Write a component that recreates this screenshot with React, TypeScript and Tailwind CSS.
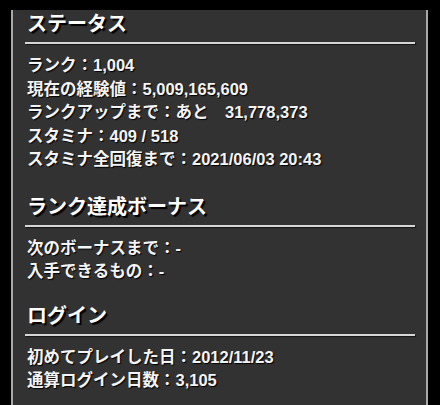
import React from 'react';

type Section = { title: string; rows: string[]; gap: string };

const sections: Section[] = [
  {
    title: 'ステータス',
    gap: 'mt-[10px]',
    rows: [
      'ランク：1,004',
      '現在の経験値：5,009,165,609',
      'ランクアップまで：あと　31,778,373',
      'スタミナ：409 / 518',
      'スタミナ全回復まで：2021/06/03 20:43',
    ],
  },
  {
    title: 'ランク達成ボーナス',
    gap: 'mt-[21px]',
    rows: ['次のボーナスまで：-', '入手できるもの：-'],
  },
  {
    title: 'ログイン',
    gap: 'mt-[18px]',
    rows: ['初めてプレイした日：2012/11/23', '通算ログイン日数：3,105'],
  },
];

export default function App() {
  return (
    <div
      className="h-[405px] w-[440px] overflow-hidden bg-black"
      style={{ fontFamily: '"Liberation Sans", "Noto Sans CJK JP", sans-serif' }}
    >
      <div className="ml-[11px] h-full w-[417px] border-x-2 border-[#a8a8a8] bg-[#323232] pl-3 pr-[11px]">
        {sections.map((s) => (
          <section key={s.title} className={s.gap}>
            <h2 className="pl-[2px] text-[20px] font-bold leading-[28px] text-white [text-shadow:2px_2px_1px_#000]">
              {s.title}
            </h2>
            <div className="mt-[4px] h-[2px] bg-[#d6d6d6] shadow-[1px_1px_1px_#151515]" />
            <div className="mt-[10px] pl-[2px]">
              {s.rows.map((r) => (
                <div
                  key={r}
                  className="whitespace-pre text-[16.5px] font-bold leading-[23.5px] text-[#f4f4f4] [text-shadow:1px_1px_1px_#000]"
                >
                  {r}
                </div>
              ))}
            </div>
          </section>
        ))}
      </div>
    </div>
  );
}
